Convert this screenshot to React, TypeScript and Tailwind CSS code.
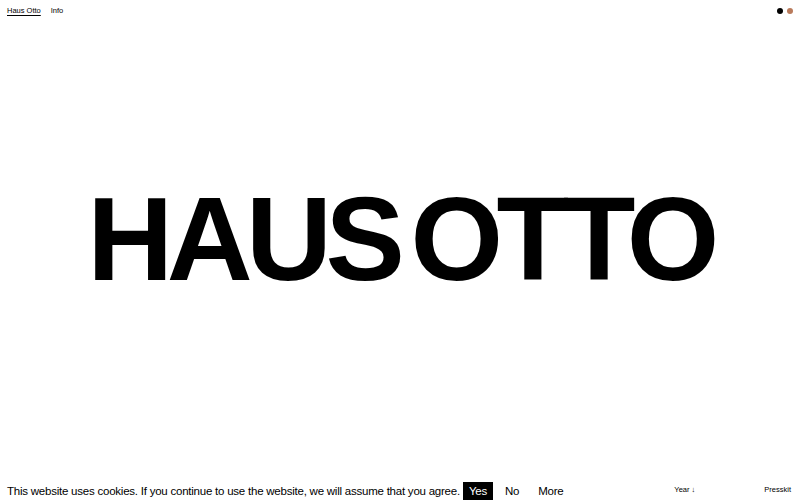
import React from "react";

export default function App() {
  return (
    <div className="flex h-[500px] w-[800px] flex-col overflow-hidden bg-white text-black font-['Liberation_Sans',Arial,sans-serif]">
      <header className="flex h-[22px] items-center justify-between px-[7px]">
        <nav className="flex items-center gap-[10px] text-[7.5px] leading-none">
          <a className="underline underline-offset-2">Haus Otto</a>
          <a>Info</a>
        </nav>
        <div className="flex items-center gap-[4px]">
          <span className="h-[6px] w-[6px] rounded-full bg-black" />
          <span className="h-[6px] w-[6px] rounded-full bg-[#b97b5c]" />
        </div>
      </header>

      <main className="flex flex-1 items-center justify-center pb-[24px]">
        <h1 className="text-[119px] font-bold leading-none tracking-[-0.055em] [word-spacing:-0.12em]">
          HAUS OTTO
        </h1>
      </main>

      <footer className="flex h-[22px] items-end">
        <div className="flex items-end text-[11.5px] leading-none tracking-[-0.02em]">
          <p className="pb-[3px] pl-[7px]">
            This website uses cookies. If you continue to use the website, we will assume that you agree.
          </p>
          <button className="ml-[3px] bg-black px-[6px] pb-[3px] pt-[4px] text-white">Yes</button>
          <button className="ml-[12px] pb-[3px]">No</button>
          <button className="ml-[19px] pb-[3px]">More</button>
        </div>
        <div className="ml-auto flex items-end pb-[7px] pr-[9px] text-[7.5px] leading-none">
          <span>Year ↓</span>
          <span className="ml-[69px]">Presskit</span>
        </div>
      </footer>
    </div>
  );
}
